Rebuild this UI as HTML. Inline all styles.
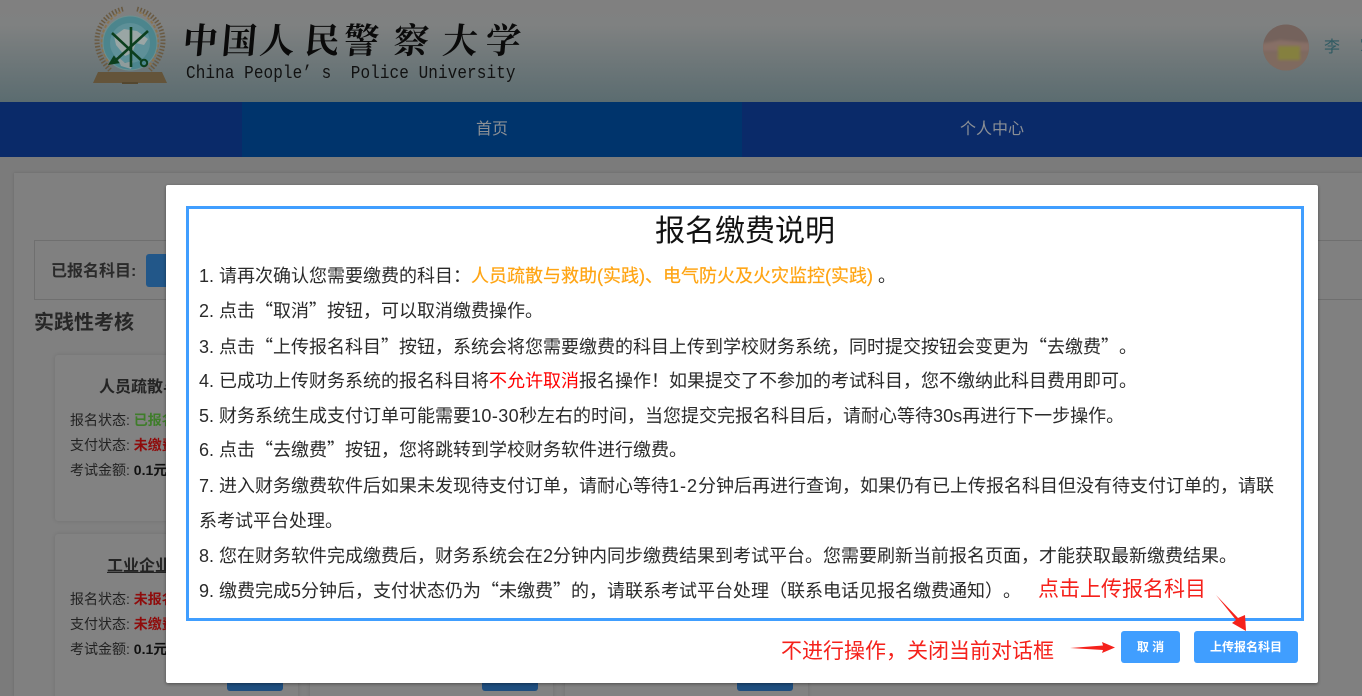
<!DOCTYPE html>
<html lang="zh"><head><meta charset="utf-8"><title>报名缴费说明</title>
<style>
html,body{margin:0;padding:0;width:1362px;height:696px;overflow:hidden}
body{position:relative;background:#7b7b7b;font-family:"Liberation Sans","Noto Sans CJK SC",sans-serif;color:#000}
#wrap{position:absolute;left:0;top:0;width:1362px;height:696px;overflow:hidden}
div,span{box-sizing:border-box}
.a{position:absolute;white-space:nowrap}
i{font-style:normal;font-family:"Noto Sans CJK SC",sans-serif}
#hd{left:0;top:0;width:1362px;height:102px;background:linear-gradient(#808080 0%,#7f8181 25%,#5b6c70 100%)}
#nav{left:0;top:102px;width:1362px;height:55px;background:#0a2a69}
#act{left:242px;top:102px;width:500px;height:55px;background:#00346c}
.nv{top:102px;height:55px;line-height:56px;font-size:16px;color:#8b8f95;width:500px;text-align:center}
.cal{font-family:"Noto Serif CJK SC",serif;font-size:35px;font-weight:700;color:#0a0a0a;line-height:46px;top:16px;transform:skewX(-5deg)}
#en{left:186px;top:63px;font-family:"Liberation Mono",monospace;font-size:16px;line-height:18px;color:#111;white-space:pre;letter-spacing:.09px;transform-origin:0 0;transform:scaleY(1.15)}
#panel{left:14px;top:173px;width:1348px;height:523px;background:#808080;box-shadow:0 0 3px rgba(0,0,0,.15)}
#box{left:34px;top:240px;width:1328px;height:60px;border:1px solid #6f6f6f;border-right:0}
.card{width:243px;background:#828282;box-shadow:0 0 4px rgba(0,0,0,.12);border-radius:3px}
.s{font-size:14px;line-height:18px;color:#222}
.s b{font-size:14px}
.t{font-size:16px;font-weight:700;color:#242424;line-height:22px}
.cb{width:56px;height:30px;top:661px;background:#1f4e7f;border-radius:3px}
#dlg{left:166px;top:185px;width:1152px;height:498px;background:#fff;border-radius:2px;box-shadow:0 1px 3px rgba(0,0,0,.4)}
#frm{left:186px;top:206px;width:1118px;height:415px;border:3px solid #409eff}
.l{left:199px;font-size:18px;line-height:35px;height:35px;color:#2a2a2a;text-spacing-trim:space-all}
#ttl{left:186px;width:1118px;text-align:center;top:211px;font-size:30px;line-height:42px;color:#111}
.btn{background:#409eff;color:#fff;border-radius:3px;text-align:center;font-size:12px;line-height:32px;height:32px;top:631px}
.rd{color:#f5211b;font-size:21px;line-height:28px}
</style></head><body><div id="wrap">
<div class="a" id="hd"></div>
<svg class="a" style="left:90px;top:6px" width="84" height="80" viewBox="0 0 84 80">
<g fill="none" stroke="#6a5a42" stroke-width="5" stroke-dasharray="1.500 1.800"><path d="M33 3C5 10-2 42 20 64"/><path d="M47 3C75 10 82 42 60 64"/></g>
<g fill="none" stroke="#8a7450" stroke-width="2" stroke-dasharray="3 2"><path d="M31 6C10 16 5 42 22 61"/><path d="M49 6C70 16 75 42 58 61"/></g>
<circle cx="40" cy="37" r="27" fill="#4c858d"/><circle cx="40" cy="37" r="27" fill="none" stroke="#6d8f8e" stroke-width="1"/><circle cx="40" cy="37" r="20" fill="#5e9098"/>
<path d="M24 30l10-7 13 2 11 8-4 6-8-2-4 10-7 3-9-11z" fill="#9aa6a5"/><path d="M26 49l9 8 8-2-2 8-10-3z" fill="#8f9c9c"/>
<g stroke="#0c3f1d" fill="none"><path d="M41 21v40" stroke-width="2.600"/><path d="M22 27l29 27" stroke-width="2.600"/><path d="M58 25L26 54" stroke-width="2.600"/><circle cx="54" cy="57" r="3.200" stroke-width="2"/><path d="M24 52l-3 5 6-1z" stroke-width="3"/></g>
<path d="M8 66h64l5 11-2 0H5l-2 0z" fill="#64543a"/><path d="M32 76h16v2H32z" fill="#54472f"/>
</svg>
<span class="a cal" style="left:183px">中</span><span class="a cal" style="left:222px">国</span><span class="a cal" style="left:260px">人</span><span class="a cal" style="left:305px">民</span><span class="a cal" style="left:344px">警</span><span class="a cal" style="left:394px">察</span><span class="a cal" style="left:443px">大</span><span class="a cal" style="left:486px">学</span>
<div class="a" id="en">China People’ s  Police University</div>
<svg class="a" style="left:1262px;top:24px" width="48" height="48" viewBox="0 0 48 48"><defs><clipPath id="c"><circle cx="24" cy="23.500" r="23"/></clipPath></defs><circle cx="24" cy="23.500" r="23" fill="#79675f"/><g clip-path="url(#c)"><g style="filter:blur(1.200px)"><rect x="0" y="0" width="48" height="18" fill="#74625c"/><rect x="0" y="28" width="48" height="20" fill="#7f6a5f"/><path d="M0 20l18-4 30 3v8H0z" fill="#876f66"/><rect x="16" y="22" width="22" height="14" fill="#85803f"/></g></g></svg>
<span class="a" style="left:1324px;top:37px;font-size:16px;line-height:22px;color:#2f5a62">李</span>
<span class="a" style="left:1360px;top:37px;font-size:16px;line-height:22px;color:#2f5a62">军</span>
<div class="a" id="nav"></div><div class="a" id="act"></div>
<div class="a nv" style="left:242px">首页</div><div class="a nv" style="left:742px">个人中心</div>
<div class="a" id="panel"></div><div class="a" id="box"></div>
<span class="a" style="left:51px;top:261px;font-size:16px;font-weight:700;line-height:22px;color:#2a2a2a">已报名科目:</span>
<div class="a" style="left:146px;top:254px;width:30px;height:33px;background:#225789;border-radius:3px"></div>
<span class="a" style="left:34px;top:309px;font-size:20px;font-weight:700;line-height:28px;color:#272727">实践性考核</span>
<div class="a card" style="left:55px;top:355px;height:166px"></div>
<div class="a card" style="left:55px;top:534px;height:170px"></div>
<div class="a card" style="left:310px;top:534px;height:170px"></div>
<div class="a card" style="left:565px;top:534px;height:170px"></div>
<span class="a t" style="left:99px;top:377px">人员疏散与</span>
<span class="a t" style="left:107px;top:556px;text-decoration:underline">工业企业</span>
<span class="a s" style="left:70px;top:411px">报名状态: <b style="color:#3f7d2a">已报名</b></span>
<span class="a s" style="left:70px;top:436px">支付状态: <b style="color:#8f0c0c">未缴费</b></span>
<span class="a s" style="left:70px;top:461px">考试金额: <b style="color:#111">0.1元</b></span>
<span class="a s" style="left:70px;top:590px">报名状态: <b style="color:#8f0c0c">未报名</b></span>
<span class="a s" style="left:70px;top:615px">支付状态: <b style="color:#8f0c0c">未缴费</b></span>
<span class="a s" style="left:70px;top:640px">考试金额: <b style="color:#111">0.1元</b></span>
<div class="a cb" style="left:227px"></div><div class="a cb" style="left:482px"></div><div class="a cb" style="left:737px"></div>
<div class="a" id="dlg"></div><div class="a" id="frm"></div>
<div class="a" id="ttl">报名缴费说明</div>
<div class="a l" style="top:259px">1. 请再次确认您需要缴费的科目：<span style="color:#ffa412;-webkit-text-stroke:.2px #ffa412">人员疏散与救助(实践)、电气防火及火灾监控(实践)</span> 。</div>
<div class="a l" style="top:293px">2. 点击<i>“</i>取消<i>”</i>按钮，可以取消缴费操作。</div>
<div class="a l" style="top:329px">3. 点击<i>“</i>上传报名科目<i>”</i>按钮，系统会将您需要缴费的科目上传到学校财务系统，同时提交按钮会变更为<i>“</i>去缴费<i>”</i>。</div>
<div class="a l" style="top:364px">4. 已成功上传财务系统的报名科目将<span style="color:#f00">不允许取消</span>报名操作！如果提交了不参加的考试科目，您不缴纳此科目费用即可。</div>
<div class="a l" style="top:399px">5. 财务系统生成支付订单可能需要<span style="letter-spacing:.4px">10-30</span>秒左右的时间，当您提交完报名科目后，请耐心等待30s再进行下一步操作。</div>
<div class="a l" style="top:432px">6. 点击<i>“</i>去缴费<i>”</i>按钮，您将跳转到学校财务软件进行缴费。</div>
<div class="a l" style="top:469px">7. 进入财务缴费软件后如果未发现待支付订单，请耐心等待<span style="letter-spacing:1px">1-2</span>分钟后再进行查询，如果仍有已上传报名科目但没有待支付订单的，请联</div>
<div class="a l" style="top:504px">系考试平台处理。</div>
<div class="a l" style="top:539px">8. 您在财务软件完成缴费后，财务系统会在2分钟内同步缴费结果到考试平台。您需要刷新当前报名页面，才能获取最新缴费结果。</div>
<div class="a l" style="top:573px">9. 缴费完成5分钟后，支付状态仍为<i>“</i>未缴费<i>”</i>的，请联系考试平台处理（联系电话见报名缴费通知）。</div>
<span class="a rd" style="left:1038px;top:576px">点击上传报名科目</span>
<span class="a rd" style="left:781px;top:638px">不进行操作，关闭当前对话框</span>
<svg class="a" style="left:1060px;top:585px" width="200" height="80" viewBox="0 0 200 80" fill="#f5211b"><path d="M10 63l33-2.500-1-3.500 13 5.500-13 5.500 1-3z"/><path d="M156 10l22 23 7-3 1 16-14-8 4-3z"/></svg>
<div class="a btn" style="left:1121px;width:59px;font-weight:700">取 消</div>
<div class="a btn" style="left:1194px;width:104px;font-weight:700">上传报名科目</div>
</div></body></html>
